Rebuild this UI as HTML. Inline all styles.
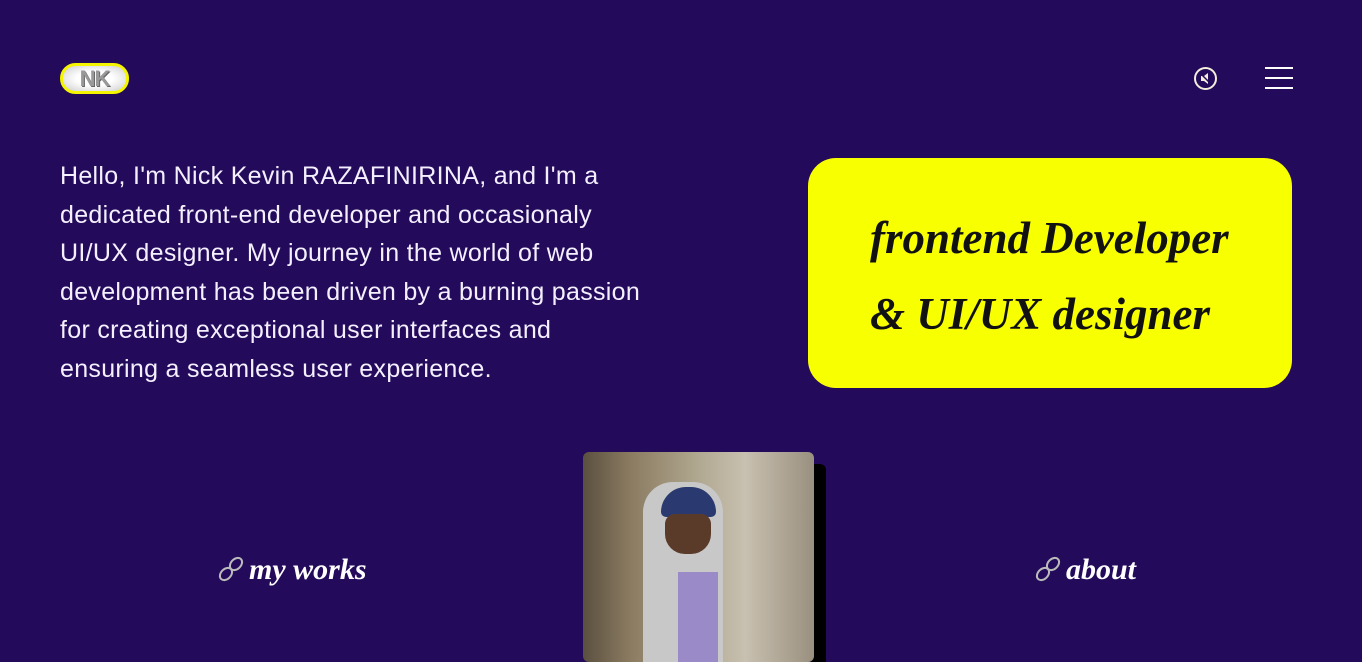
<!DOCTYPE html>
<html><head><meta charset="utf-8"><style>
*{margin:0;padding:0;box-sizing:border-box}
html,body{width:1362px;height:650px;overflow:hidden;background:#230a5a;font-family:"Liberation Sans",sans-serif;color:#fff}
.logo{position:absolute;left:60px;top:63px;width:69px;height:31px;border:3px solid #f5f500;border-radius:16px;background:radial-gradient(ellipse at center,#fff 40%,#ccc 100%);text-align:center;font:bold 22px/25px "Liberation Sans",sans-serif;color:#999;text-shadow:1px 1px 0 #666;letter-spacing:-1px}
.intro{position:absolute;left:60px;top:157px;width:700px;font-size:25px;line-height:38.5px;color:#f4f0ff;letter-spacing:0.3px;white-space:nowrap}
.card{position:absolute;left:808px;top:158px;width:484px;height:230px;background:#f8ff00;border-radius:28px;color:#111;font:italic bold 45px/76px "Liberation Serif",serif;padding:42px 0 0 62px}
.link{position:absolute;top:550px;font:italic bold 30px/40px "Liberation Serif",serif;color:#fff}
.link svg{vertical-align:-4px;margin-right:4px}
.photo{position:absolute;left:583px;top:452px;width:231px;height:210px;border-radius:6px;box-shadow:12px 12px 0 #000;background:linear-gradient(90deg,#5a5040 0%,#8a7a60 20%,#b0a890 50%,#c8c0b0 70%,#9a9080 100%);overflow:hidden}
</style></head><body>
<div class="logo">NK</div>
<svg style="position:absolute;left:1193px;top:66px" width="25" height="25" viewBox="0 0 25 25"><circle cx="12.5" cy="12.5" r="10.5" fill="none" stroke="#f4eedc" stroke-width="2"/><path d="M8 10h3l4-3v11l-4-3H8z" fill="#f4eedc"/><path d="M7 7l11 11" stroke="#230a5a" stroke-width="1.5"/></svg>
<svg style="position:absolute;left:1265px;top:67px" width="28" height="24"><rect y="0" width="28" height="2" fill="#fff"/><rect y="10" width="28" height="2" fill="#fff"/><rect y="20" width="28" height="2" fill="#fff"/></svg>
<div class="intro">Hello, I'm Nick Kevin RAZAFINIRINA, and I'm a<br>dedicated front-end developer and occasionaly<br>UI/UX designer. My journey in the world of web<br>development has been driven by a burning passion<br>for creating exceptional user interfaces and<br>ensuring a seamless user experience.</div>
<div class="card">frontend Developer<br>&amp; UI/UX designer</div>
<div class="link" style="left:217px"><svg width="28" height="28" viewBox="0 0 28 28" fill="none" stroke="#bbb" stroke-width="2"><ellipse cx="19" cy="9" rx="5" ry="7" transform="rotate(45 19 9)"/><ellipse cx="9" cy="19" rx="5" ry="7" transform="rotate(45 9 19)"/></svg>my works</div>
<div class="photo">
<div style="position:absolute;left:60px;top:30px;width:80px;height:190px;background:#c8c8c8;border-radius:30px 30px 0 0"></div>
<div style="position:absolute;left:78px;top:35px;width:55px;height:30px;background:#2a3a70;border-radius:25px 25px 5px 5px"></div>
<div style="position:absolute;left:82px;top:62px;width:46px;height:40px;background:#5a3a28;border-radius:10px 10px 20px 20px"></div>
<div style="position:absolute;left:95px;top:120px;width:40px;height:90px;background:#9a8ac8"></div>
</div>
<div class="link" style="left:1034px"><svg width="28" height="28" viewBox="0 0 28 28" fill="none" stroke="#bbb" stroke-width="2"><ellipse cx="19" cy="9" rx="5" ry="7" transform="rotate(45 19 9)"/><ellipse cx="9" cy="19" rx="5" ry="7" transform="rotate(45 9 19)"/></svg>about</div>
</body></html>
